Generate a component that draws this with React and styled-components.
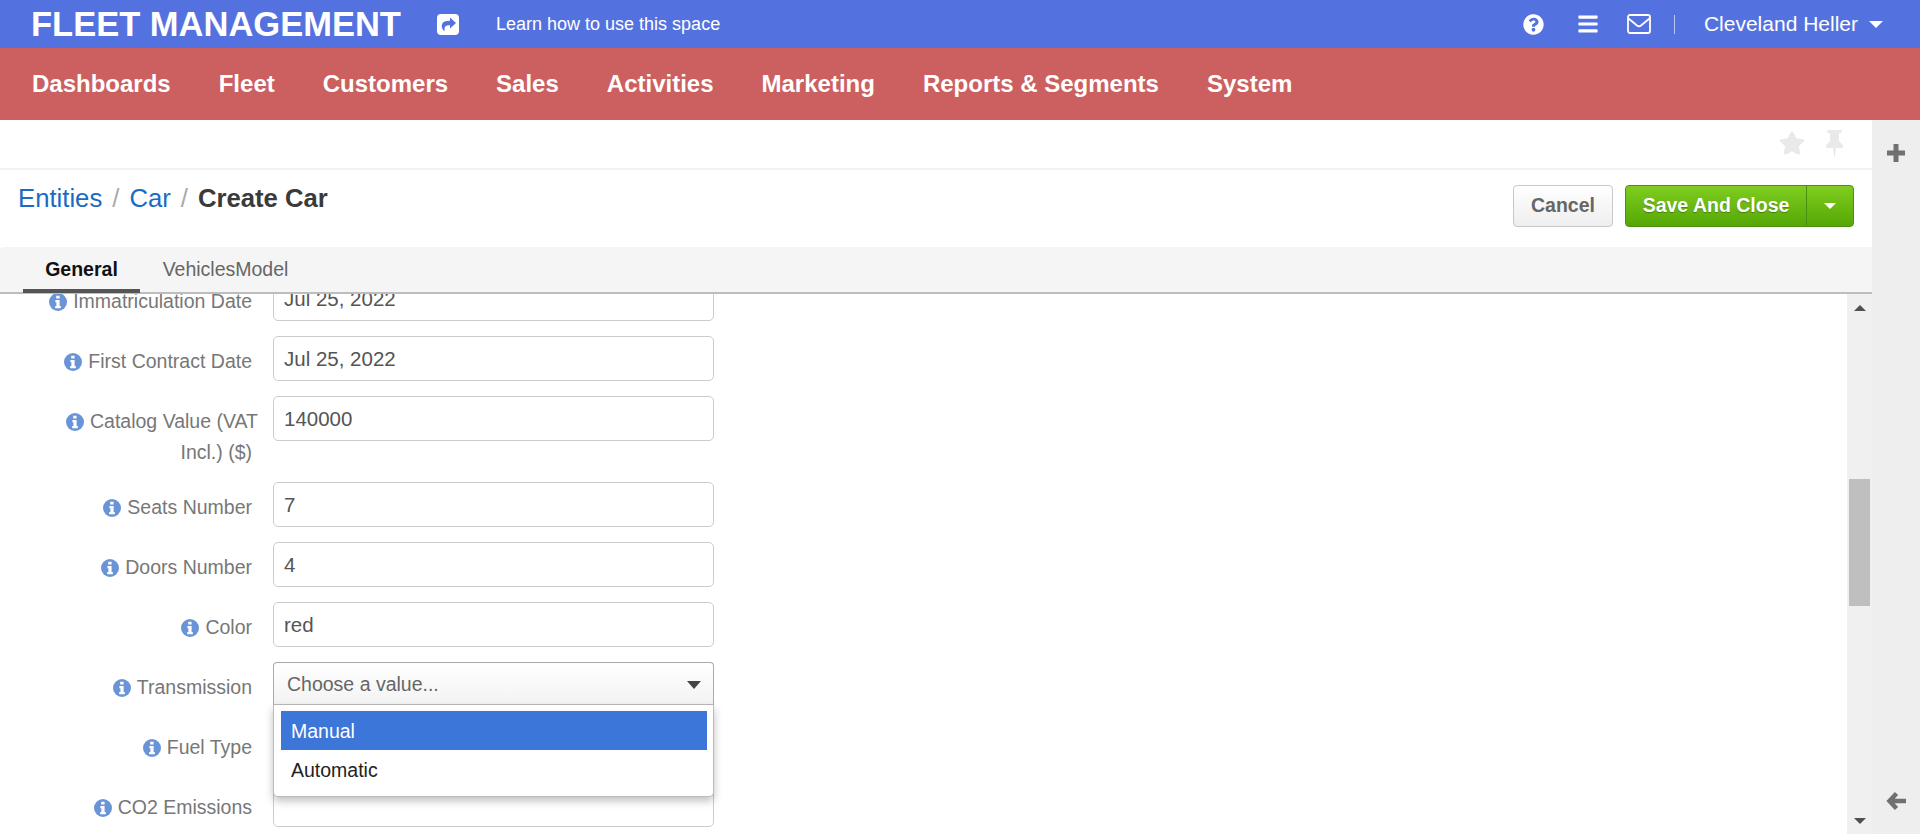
import React from "react";
import styled, { createGlobalStyle } from "styled-components";
import { FaQuestionCircle, FaBars, FaStar } from "react-icons/fa";

const GlobalStyle = createGlobalStyle`
  * { box-sizing: border-box; }
  html, body { margin: 0; padding: 0; height: 100%; overflow: hidden; }
  body { font-family: "Liberation Sans", Arial, sans-serif; background: #fff; }
`;

const Page = styled.div`
  display: flex;
  flex-direction: column;
  height: 100vh;
  overflow: hidden;
`;

const TopBar = styled.header`
  display: flex;
  align-items: center;
  height: 48px;
  flex: none;
  padding: 0 37px 0 31px;
  background: #5472df;
  color: #fff;
`;

const Brand = styled.div`
  font-size: 34.5px;
  font-weight: 700;
  width: 406px;
`;

const ShareLink = styled.span`
  display: flex;
  margin-right: 37px;
`;

const Hint = styled.span`
  font-size: 18px;
`;

const TopRight = styled.div`
  display: flex;
  align-items: center;
  margin-left: auto;
`;

const TopIcon = styled.span`
  display: flex;
  font-size: ${(p) => p.$size}px;
  margin-right: ${(p) => p.$gap}px;
`;

const TopDivider = styled.span`
  width: 1px;
  height: 19px;
  background: #b9c6f2;
  margin-right: 29px;
`;

const UserName = styled.span`
  font-size: 21px;
`;

const Caret = styled.span`
  width: 0;
  height: 0;
  margin-left: 11px;
  border-left: 7px solid transparent;
  border-right: 7px solid transparent;
  border-top: 7px solid ${(p) => p.$color || "#fff"};
`;

const NavBar = styled.nav`
  display: flex;
  align-items: center;
  gap: 48px;
  height: 72px;
  flex: none;
  padding: 0 32px;
  background: #cc6060;
`;

const NavItem = styled.a`
  color: #fff;
  font-size: 24px;
  font-weight: 700;
`;

const Body = styled.div`
  display: flex;
  flex: 1;
  min-height: 0;
`;

const Workspace = styled.main`
  display: flex;
  flex-direction: column;
  flex: 1;
  min-width: 0;
`;

const SideRail = styled.aside`
  display: flex;
  flex-direction: column;
  align-items: center;
  justify-content: space-between;
  width: 48px;
  flex: none;
  padding: 23px 0 23px;
  background: #eeeeee;
`;

const PinRow = styled.div`
  display: flex;
  align-items: center;
  justify-content: flex-end;
  gap: 20px;
  height: 50px;
  flex: none;
  padding: 0 28px 3px 0;
  border-bottom: 2px solid #f2f2f2;
  color: #e9e9e9;
  font-size: 26px;
`;

const TitleRow = styled.div`
  display: flex;
  justify-content: space-between;
  height: 77px;
  flex: none;
  padding: 15px 18px 0;
`;

const Crumbs = styled.div`
  display: flex;
  gap: 10px;
  height: 30px;
  font-size: 25.7px;
  line-height: 26px;
  color: #aaa;
`;

const CrumbLink = styled.a`
  color: #1a6bc4;
`;

const CrumbCurrent = styled.strong`
  color: #3a3a3a;
`;

const Actions = styled.div`
  display: flex;
  align-items: flex-start;
  gap: 12px;
`;

const CancelButton = styled.button`
  width: 100px;
  height: 42px;
  padding: 0 0 2px;
  border: 1px solid #c8c8c8;
  border-radius: 4px;
  background: linear-gradient(#ffffff, #eeeeee);
  color: #666;
  font: 700 19.5px "Liberation Sans", Arial, sans-serif;
`;

const SaveGroup = styled.div`
  display: flex;
  height: 42px;
  border: 1px solid #4a8f10;
  border-radius: 4px;
  background: linear-gradient(#80cd20, #55a705);
  color: #fff;
  text-shadow: 0 1px 1px rgba(0, 0, 0, 0.3);
`;

const SaveLabel = styled.span`
  display: flex;
  align-items: center;
  justify-content: center;
  width: 181px;
  padding-bottom: 2px;
  border-right: 1px solid #4a8f10;
  font-size: 19.5px;
  font-weight: 700;
`;

const SaveToggle = styled.span`
  display: flex;
  align-items: center;
  justify-content: center;
  width: 46px;

  ${Caret} {
    margin: 0;
    border-width: 6px 6px 0;
  }
`;

const Tabs = styled.div`
  display: flex;
  height: 47px;
  flex: none;
  padding-left: 23px;
  background: #f5f5f5;
  border-bottom: 2px solid #bdbdbd;
  border-radius: 4px 0 0 0;
`;

const Tab = styled.div`
  display: flex;
  align-items: center;
  justify-content: center;
  width: ${(p) => p.$width}px;
  height: 46px;
  padding-top: 2px;
  font-size: 19.5px;
  font-weight: ${(p) => (p.$active ? 700 : 400)};
  color: ${(p) => (p.$active ? "#111" : "#666")};
  border-bottom: 4px solid ${(p) => (p.$active ? "#555" : "transparent")};
`;

const ScrollArea = styled.div`
  display: flex;
  flex: 1;
  min-height: 0;
`;

const FormArea = styled.div`
  flex: 1;
  min-width: 0;
  overflow: hidden;
`;

// list is scrolled: the first row is cut by the tabs
const Form = styled.form`
  display: flex;
  flex-direction: column;
  gap: 15px;
  margin-top: -18px;
  padding-left: 43px;
`;

const Row = styled.div`
  display: flex;
  gap: 15px;
`;

const Label = styled.label`
  flex: none;
  width: 215px;
  padding-top: 10px;
  font-size: 19.5px;
  line-height: 30.5px;
  text-align: right;
  color: #777;

  svg {
    vertical-align: -3px;
    margin-right: 6px;
  }
`;

const Suffix = styled.span`
  display: inline-block;
  width: 6px;
`;

const Input = styled.input`
  width: 441px;
  height: 45px;
  padding: 0 10px;
  border: 1px solid #ccc;
  border-radius: 5px;
  background: #fff;
  color: #555;
  font: 20.5px "Liberation Sans", Arial, sans-serif;
  outline: none;
`;

const SelectBox = styled.div`
  position: relative;
  width: 441px;
  height: 45px;
`;

const SelectHead = styled.div`
  display: flex;
  align-items: center;
  justify-content: space-between;
  height: 43px;
  padding: 2px 12px 0 13px;
  border: 1px solid #aaa;
  border-bottom-color: #bbb;
  border-radius: 4px 4px 0 0;
  background: linear-gradient(#ffffff, #f3f3f3);
  color: #666;
  font-size: 19.5px;

  ${Caret} {
    border-top-color: #444;
    border-width: 8px 7px 0;
  }
`;

const Menu = styled.ul`
  position: absolute;
  top: 43px;
  left: 0;
  z-index: 2;
  width: 441px;
  height: 92px;
  margin: 0;
  padding: 6px 6px 0 7px;
  list-style: none;
  background: #fff;
  border: 1px solid #bbb;
  border-top: 0;
  border-radius: 0 0 5px 5px;
  box-shadow: 0 4px 8px rgba(0, 0, 0, 0.25);
`;

const MenuItem = styled.li`
  height: 39px;
  padding-left: 10px;
  line-height: 40px;
  font-size: 19.5px;
  color: ${(p) => (p.$active ? "#fff" : "#222")};
  background: ${(p) => (p.$active ? "#3b76d8" : "transparent")};
`;

const ScrollBar = styled.div`
  display: flex;
  flex-direction: column;
  align-items: center;
  width: 25px;
  flex: none;
  padding: 11px 0 10px;
  background: #f0f0f0;
`;

const ScrollArrow = styled.span`
  width: 0;
  height: 0;
  border-left: 6px solid transparent;
  border-right: 6px solid transparent;
  border-${(p) => (p.$up ? "bottom" : "top")}: 6px solid #505050;
`;

const ScrollTrack = styled.div`
  flex: 1;
  width: 21px;
  padding-top: 168px;
`;

const ScrollThumb = styled.div`
  height: 127px;
  background: #bfbfbf;
`;

const navItems = [
  "Dashboards",
  "Fleet",
  "Customers",
  "Sales",
  "Activities",
  "Marketing",
  "Reports & Segments",
  "System",
];

const fields = [
  { label: "Immatriculation Date", value: "Jul 25, 2022" },
  { label: "First Contract Date", value: "Jul 25, 2022" },
  { label: "Catalog Value (VAT Incl.) ($)", value: "140000" },
  { label: "Seats Number", value: "7" },
  { label: "Doors Number", value: "4" },
  { label: "Color", value: "red" },
];

const ShareIcon = () => (
  <svg width="22" height="21" viewBox="0 0 22 21">
    <rect width="22" height="21" rx="4" fill="#fff" />
    <path d="M13 3.500l6 5.500-6 5.500v-3.300c-3.200-.3-5 .9-5.400 2.600-.2.900 0 1.900.4 2.700H6.500C4.800 14.500 4.200 12 5.200 9.800 6.300 7.500 9 6.700 13 6.800z" fill="#5472df" />
  </svg>
);

const EnvelopeIcon = () => (
  <svg width="24" height="20" viewBox="0 0 24 20" fill="none" stroke="#fff" strokeWidth="1.8">
    <rect x="1" y="1" width="22" height="18" rx="2" />
    <path d="M1.500 4.500l8.500 7q2 1.500 4 0l8.500-7" />
  </svg>
);

const InfoIcon = () => (
  <svg width="18" height="18" viewBox="0 0 18 18">
    <circle cx="9" cy="9" r="9" fill="#6a94d8" />
    <path d="M7.200 2.800h3.400v2.800H7.200zM6.400 7h4.200v6h1.200v2.200H6.200V13h1.200V9.200h-1z" fill="#fff" />
  </svg>
);

const PinIcon = () => (
  <svg width="19" height="28" viewBox="0 0 19 28" fill="#e9e9e9">
    <path d="M2.500 1h14v3h-2.500v8l4 4.500V19h-7l-1.200 9h-.6L8 19H1v-2.500L5 12V4H2.500z" />
  </svg>
);

const PlusIcon = () => (
  <svg width="20" height="20" viewBox="0 0 20 20" stroke="#707070" strokeWidth="5">
    <path d="M10 1v18M1 10h18" />
  </svg>
);

const BackIcon = () => (
  <svg width="20" height="20" viewBox="0 0 20 20" fill="none" stroke="#707070" strokeWidth="4.500">
    <path d="M10.500 2.500L3.500 10l7 7.500M4 10h16" />
  </svg>
);

const FieldLabel = ({ children }) => (
  <Label>
    <InfoIcon />
    {children}
    <Suffix />
  </Label>
);

const App = () => (
  <Page>
    <GlobalStyle />
    <TopBar>
      <Brand>FLEET MANAGEMENT</Brand>
      <ShareLink>
        <ShareIcon />
      </ShareLink>
      <Hint>Learn how to use this space</Hint>
      <TopRight>
        <TopIcon $size={21} $gap={33}>
          <FaQuestionCircle />
        </TopIcon>
        <TopIcon $size={22} $gap={28}>
          <FaBars />
        </TopIcon>
        <TopIcon $size={24} $gap={23}>
          <EnvelopeIcon />
        </TopIcon>
        <TopDivider />
        <UserName>Cleveland Heller</UserName>
        <Caret />
      </TopRight>
    </TopBar>
    <NavBar>
      {navItems.map((item) => (
        <NavItem key={item}>{item}</NavItem>
      ))}
    </NavBar>
    <Body>
      <Workspace>
        <PinRow>
          <FaStar />
          <PinIcon />
        </PinRow>
        <TitleRow>
          <Crumbs>
            <CrumbLink>Entities</CrumbLink>/<CrumbLink>Car</CrumbLink>/
            <CrumbCurrent>Create Car</CrumbCurrent>
          </Crumbs>
          <Actions>
            <CancelButton>Cancel</CancelButton>
            <SaveGroup>
              <SaveLabel>Save And Close</SaveLabel>
              <SaveToggle>
                <Caret />
              </SaveToggle>
            </SaveGroup>
          </Actions>
        </TitleRow>
        <Tabs>
          <Tab $active $width={117}>General</Tab>
          <Tab $width={171}>VehiclesModel</Tab>
        </Tabs>
        <ScrollArea>
          <FormArea>
            <Form>
              {fields.map((f) => (
                <Row key={f.label}>
                  <FieldLabel>{f.label}</FieldLabel>
                  <Input defaultValue={f.value} />
                </Row>
              ))}
              <Row>
                <FieldLabel>Transmission</FieldLabel>
                <SelectBox>
                  <SelectHead>
                    Choose a value...
                    <Caret />
                  </SelectHead>
                  <Menu>
                    <MenuItem $active>Manual</MenuItem>
                    <MenuItem>Automatic</MenuItem>
                  </Menu>
                </SelectBox>
              </Row>
              <Row>
                <FieldLabel>Fuel Type</FieldLabel>
                <Input />
              </Row>
              <Row>
                <FieldLabel>CO2 Emissions</FieldLabel>
                <Input />
              </Row>
            </Form>
          </FormArea>
          <ScrollBar>
            <ScrollArrow $up />
            <ScrollTrack>
              <ScrollThumb />
            </ScrollTrack>
            <ScrollArrow />
          </ScrollBar>
        </ScrollArea>
      </Workspace>
      <SideRail>
        <PlusIcon />
        <BackIcon />
      </SideRail>
    </Body>
  </Page>
);

export default App;
